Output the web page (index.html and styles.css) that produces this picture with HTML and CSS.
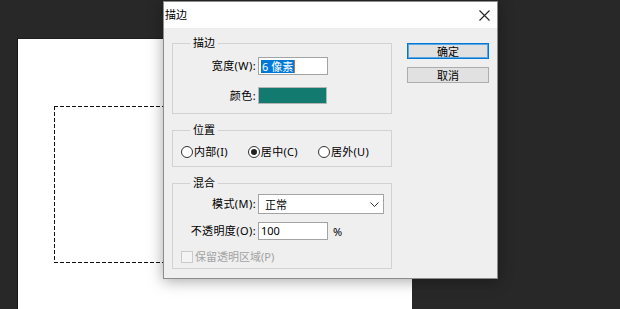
FILE: index.html
```html
<!DOCTYPE html>
<html lang="zh-CN">
<head>
  <meta charset="UTF-8">
  <title>描边</title>
  <link rel="stylesheet" href="styles.css">
</head>
<body>

  <div class="workspace">
    <!-- document canvas -->
    <div class="canvas">
      <div class="marquee"></div>
    </div>

    <!-- Stroke dialog -->
    <div class="dialog">
      <div class="titlebar">
        <span class="title">描边</span>
        <svg class="close" width="11" height="11" viewBox="0 0 11 11">
          <path d="M0.5 0.5 L10.5 10.5 M10.5 0.5 L0.5 10.5" stroke="#222" stroke-width="1.1" fill="none"/>
        </svg>
      </div>

      <div class="dialog-body">
        <div class="groups">

          <div class="group group-stroke">
            <span class="group-title">描边</span>
            <div class="form-grid">
              <label class="field-label">宽度(W):</label>
              <div class="textbox width-box"><span class="selected">6 像素</span><span class="caret"></span></div>
              <label class="field-label">颜色:</label>
              <div class="swatch"></div>
            </div>
          </div>

          <div class="group group-position">
            <span class="group-title">位置</span>
            <div class="radio-row">
              <span class="radio-item"><span class="radio"></span>内部(I)</span>
              <span class="radio-item"><span class="radio checked"></span>居中(C)</span>
              <span class="radio-item"><span class="radio"></span>居外(U)</span>
            </div>
          </div>

          <div class="group group-blend">
            <span class="group-title">混合</span>
            <div class="form-grid blend-grid">
              <label class="field-label">模式(M):</label>
              <div class="select">
                <span>正常</span>
                <svg width="9" height="5" viewBox="0 0 9 5">
                  <polyline points="0.5,0.5 4.5,4.5 8.5,0.5" stroke="#333" stroke-width="1" fill="none"/>
                </svg>
              </div>
              <label class="field-label">不透明度(O):</label>
              <div class="opacity-line">
                <div class="textbox">100</div>
                <span class="unit">%</span>
              </div>
            </div>
            <div class="check-row">
              <span class="checkbox"></span>保留透明区域(P)
            </div>
          </div>

        </div>

        <div class="buttons">
          <button class="btn btn-default">确定</button>
          <button class="btn">取消</button>
        </div>
      </div>
    </div>
  </div>

</body>
</html>
```

FILE: styles.css
```css
body {
  margin: 0;
  background: #282828;
  font-family: "Noto Sans", "Noto Sans CJK SC", sans-serif;
  font-size: 11px;
  color: #000;
  overflow: hidden;
}

.workspace {
  position: relative;
  width: 620px;
  height: 309px;
  overflow: hidden;
}

.canvas {
  position: relative;
  margin: 38px 0 0 17px;
  width: 394px;
  height: 300px;
  background: #fff;
  border-left: 1px solid #161616;
  border-top: 1px solid #1e1e1e;
}

.marquee {
  position: absolute;
  left: 36px;
  top: 67px;
  width: 420px;
  height: 157px;
  background:
    repeating-linear-gradient(90deg, #111 0 4px, transparent 4px 6px) top left / 100% 1px no-repeat,
    repeating-linear-gradient(90deg, #111 0 4px, transparent 4px 6px) bottom left / 100% 1px no-repeat,
    repeating-linear-gradient(180deg, #111 0 4px, transparent 4px 6px) top left / 1px 100% no-repeat;
}

/* dialog window */
.dialog {
  position: absolute;
  left: 163px;
  top: 1px;
  width: 335px;
  height: 278px;
  box-sizing: border-box;
  background: #efefef;
  border: 1px solid #8c8c8c;
  box-shadow: 0 2px 14px rgba(0,0,0,0.35);
}

.titlebar {
  height: 26px;
  background: #fff;
  display: flex;
  align-items: center;
  justify-content: space-between;
  padding: 0 7px 0 1px;
}

.title {
  line-height: 16px;
}

.dialog-body {
  display: flex;
  align-items: flex-start;
  padding: 15px 0 0 8px;
}

.groups {
  width: 220px;
}

.group {
  position: relative;
  box-sizing: border-box;
  border: 1px solid #d2d2d2;
  margin-bottom: 16px;
}

.group-title {
  position: absolute;
  left: 17px;
  top: -9px;
  padding: 0 3px;
  background: #efefef;
  line-height: 16px;
}

.group-stroke {
  height: 71px;
  padding-top: 13px;
}

.group-position {
  height: 37px;
  padding-top: 13px;
}

.group-blend {
  height: 86px;
  padding-top: 10px;
}

.form-grid {
  display: grid;
  grid-template-columns: 83px auto;
  column-gap: 2px;
  row-gap: 12px;
  align-items: center;
}

.blend-grid {
  row-gap: 8px;
}

.field-label {
  text-align: right;
  line-height: 16px;
  letter-spacing: 0.4px;
}

.textbox {
  box-sizing: border-box;
  width: 70px;
  height: 18px;
  background: #fff;
  border: 1px solid #a3a3a3;
  padding: 0 2px;
  line-height: 16px;
  display: flex;
  align-items: center;
}

.width-box .selected {
  background: #0078d7;
  color: #fff;
  line-height: 13px;
  padding: 0 1px;
}

.width-box .caret {
  width: 1px;
  height: 13px;
  background: #c8742c;
}

.swatch {
  box-sizing: border-box;
  width: 69px;
  height: 17px;
  border: 1px solid #b4b4b4;
  background: #137a70;
}

.radio-row {
  display: flex;
  gap: 20px;
  padding-left: 8px;
  line-height: 16px;
}

.radio-item {
  display: flex;
  align-items: center;
  gap: 1px;
  letter-spacing: 0.3px;
}

.radio {
  box-sizing: border-box;
  width: 12px;
  height: 12px;
  border: 1px solid #333;
  border-radius: 50%;
  background: #fff;
  display: flex;
  align-items: center;
  justify-content: center;
}

.radio.checked::after {
  content: "";
  width: 6px;
  height: 6px;
  border-radius: 50%;
  background: #222;
}

.select {
  box-sizing: border-box;
  width: 126px;
  height: 20px;
  background: #fff;
  border: 1px solid #a3a3a3;
  display: flex;
  align-items: center;
  justify-content: space-between;
  padding: 0 4px 0 6px;
}

.opacity-line {
  display: flex;
  align-items: center;
}

.unit {
  margin-left: 5px;
}

.check-row {
  display: flex;
  align-items: center;
  gap: 2px;
  margin-top: 10px;
  padding-left: 8px;
  color: #a2a2a2;
  line-height: 14px;
}

.checkbox {
  box-sizing: border-box;
  width: 12px;
  height: 12px;
  border: 1px solid #cacaca;
  background: #f4f4f4;
}

.buttons {
  display: flex;
  flex-direction: column;
  gap: 8px;
  margin-left: 15px;
  margin-top: 0;
}

.btn {
  box-sizing: border-box;
  width: 82px;
  height: 16px;
  padding: 0;
  font-family: inherit;
  font-size: 11px;
  line-height: 13px;
  background: #e1e1e1;
  border: 1px solid #adadad;
  color: #000;
}

.btn-default {
  border-color: #0078d7;
  box-shadow: inset 0 0 0 1px #5ea6e0;
}
```
